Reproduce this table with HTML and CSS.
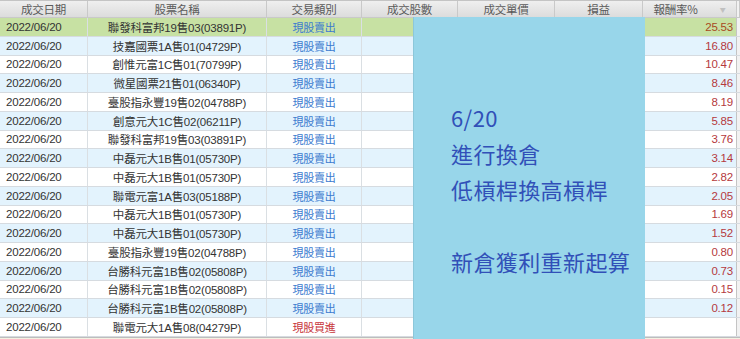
FILE: index.html
```html
<!DOCTYPE html>
<html lang="zh-Hant">
<head>
<meta charset="utf-8">
<title>成交明細</title>
<link rel="stylesheet" href="styles.css">
</head>
<body>
<div class="screen">
  <div class="grid">
    <div class="row head">
      <div class="cell">成交日期</div>
      <div class="cell">股票名稱</div>
      <div class="cell">交易類別</div>
      <div class="cell">成交股數</div>
      <div class="cell">成交單價</div>
      <div class="cell">損益</div>
      <div class="cell">報酬率% <span class="sort">▼</span></div>
      <div class="cell edge"></div>
    </div>
    <div class="row sel"><div class="cell date">2022/06/20</div><div class="cell name">聯發科富邦19售03(03891P)</div><div class="cell type">現股賣出</div><div class="cell"></div><div class="cell"></div><div class="cell"></div><div class="cell pct">25.53</div><div class="cell edge"></div></div>
    <div class="row alt"><div class="cell date">2022/06/20</div><div class="cell name">技嘉國票1A售01(04729P)</div><div class="cell type">現股賣出</div><div class="cell"></div><div class="cell"></div><div class="cell"></div><div class="cell pct">16.80</div><div class="cell edge"></div></div>
    <div class="row"><div class="cell date">2022/06/20</div><div class="cell name">創惟元富1C售01(70799P)</div><div class="cell type">現股賣出</div><div class="cell"></div><div class="cell"></div><div class="cell"></div><div class="cell pct">10.47</div><div class="cell edge"></div></div>
    <div class="row alt"><div class="cell date">2022/06/20</div><div class="cell name">微星國票21售01(06340P)</div><div class="cell type">現股賣出</div><div class="cell"></div><div class="cell"></div><div class="cell"></div><div class="cell pct">8.46</div><div class="cell edge"></div></div>
    <div class="row"><div class="cell date">2022/06/20</div><div class="cell name">臺股指永豐19售02(04788P)</div><div class="cell type">現股賣出</div><div class="cell"></div><div class="cell"></div><div class="cell"></div><div class="cell pct">8.19</div><div class="cell edge"></div></div>
    <div class="row alt"><div class="cell date">2022/06/20</div><div class="cell name">創意元大1C售02(06211P)</div><div class="cell type">現股賣出</div><div class="cell"></div><div class="cell"></div><div class="cell"></div><div class="cell pct">5.85</div><div class="cell edge"></div></div>
    <div class="row"><div class="cell date">2022/06/20</div><div class="cell name">聯發科富邦19售03(03891P)</div><div class="cell type">現股賣出</div><div class="cell"></div><div class="cell"></div><div class="cell"></div><div class="cell pct">3.76</div><div class="cell edge"></div></div>
    <div class="row alt"><div class="cell date">2022/06/20</div><div class="cell name">中磊元大1B售01(05730P)</div><div class="cell type">現股賣出</div><div class="cell"></div><div class="cell"></div><div class="cell"></div><div class="cell pct">3.14</div><div class="cell edge"></div></div>
    <div class="row"><div class="cell date">2022/06/20</div><div class="cell name">中磊元大1B售01(05730P)</div><div class="cell type">現股賣出</div><div class="cell"></div><div class="cell"></div><div class="cell"></div><div class="cell pct">2.82</div><div class="cell edge"></div></div>
    <div class="row alt"><div class="cell date">2022/06/20</div><div class="cell name">聯電元富1A售03(05188P)</div><div class="cell type">現股賣出</div><div class="cell"></div><div class="cell"></div><div class="cell"></div><div class="cell pct">2.05</div><div class="cell edge"></div></div>
    <div class="row"><div class="cell date">2022/06/20</div><div class="cell name">中磊元大1B售01(05730P)</div><div class="cell type">現股賣出</div><div class="cell"></div><div class="cell"></div><div class="cell"></div><div class="cell pct">1.69</div><div class="cell edge"></div></div>
    <div class="row alt"><div class="cell date">2022/06/20</div><div class="cell name">中磊元大1B售01(05730P)</div><div class="cell type">現股賣出</div><div class="cell"></div><div class="cell"></div><div class="cell"></div><div class="cell pct">1.52</div><div class="cell edge"></div></div>
    <div class="row"><div class="cell date">2022/06/20</div><div class="cell name">臺股指永豐19售02(04788P)</div><div class="cell type">現股賣出</div><div class="cell"></div><div class="cell"></div><div class="cell"></div><div class="cell pct">0.80</div><div class="cell edge"></div></div>
    <div class="row alt"><div class="cell date">2022/06/20</div><div class="cell name">台勝科元富1B售02(05808P)</div><div class="cell type">現股賣出</div><div class="cell"></div><div class="cell"></div><div class="cell"></div><div class="cell pct">0.73</div><div class="cell edge"></div></div>
    <div class="row"><div class="cell date">2022/06/20</div><div class="cell name">台勝科元富1B售02(05808P)</div><div class="cell type">現股賣出</div><div class="cell"></div><div class="cell"></div><div class="cell"></div><div class="cell pct">0.15</div><div class="cell edge"></div></div>
    <div class="row alt"><div class="cell date">2022/06/20</div><div class="cell name">台勝科元富1B售02(05808P)</div><div class="cell type">現股賣出</div><div class="cell"></div><div class="cell"></div><div class="cell"></div><div class="cell pct">0.12</div><div class="cell edge"></div></div>
    <div class="row"><div class="cell date">2022/06/20</div><div class="cell name">聯電元大1A售08(04279P)</div><div class="cell type buy">現股買進</div><div class="cell"></div><div class="cell"></div><div class="cell"></div><div class="cell pct"></div><div class="cell edge"></div></div>
    <div class="footer"></div>
  </div>
  <div class="note">
    <p>6/20</p>
    <p>進行換倉</p>
    <p>低槓桿換高槓桿</p>
    <p>&nbsp;</p>
    <p>新倉獲利重新起算</p>
  </div>
</div>
</body>
</html>
```
FILE: styles.css
```css
html, body {
  margin: 0;
  padding: 0;
  background: #ffffff;
}
body {
  font-family: "Liberation Sans", "Noto Sans CJK TC", sans-serif;
  font-size: 11.5px;
  color: #333333;
  width: 740px;
  height: 339px;
  overflow: hidden;
}
.screen {
  position: relative;
  width: 740px;
  height: 339px;
  overflow: hidden;
}
.grid {
  display: flex;
  flex-direction: column;
}
.row {
  display: grid;
  grid-template-columns: 88px 179px 95px 96px 97px 88px 94px 3px;
  height: 18.75px;
  box-sizing: border-box;
  border-bottom: 1px solid #d6dbe0;
  background: #ffffff;
}
.row.alt {
  background: #e3f3fd;
}
.row.sel {
  background: #c7e1a3;
}
.cell {
  display: flex;
  align-items: center;
  justify-content: center;
  border-right: 1px solid #dadfe3;
  white-space: nowrap;
  overflow: hidden;
  letter-spacing: -0.2px;
}
.row.head {
  height: 18px;
  border-top: 1px solid #c4c4c4;
  border-bottom: 1px solid #c9c9c9;
  background: linear-gradient(#efefef, #dcdcdc);
  color: #5a5a5a;
}
.row.head .cell {
  border-right: 1px solid #c9c9c9;
  font-size: 11.5px;
  font-family: "Noto Sans CJK TC", sans-serif;
}
.sort {
  color: #c0c0c0;
  font-size: 6px;
  margin-left: 22px;
}
.cell.date {
  justify-content: flex-start;
  padding-left: 6px;
  color: #333333;
}
.cell.name {
  color: #333333;
}
.cell.type {
  color: #3c7bcf;
  font-size: 11px;
  font-family: "Noto Sans CJK TC", sans-serif;
}
.cell.type.buy {
  color: #c8353a;
}
.cell.pct {
  justify-content: flex-end;
  padding-right: 3px;
  color: #b5393d;
  border-right: 1px solid #c4c4c4;
}
.row.sel .cell.pct {
  color: #a84a22;
}
.cell.edge {
  border-right: none;
  background: #f2f2f2;
}
.footer {
  height: 2px;
  border-top: 1px solid #bdbdbd;
  background: #f4f1e2;
}
.note {
  position: absolute;
  left: 413px;
  top: 17px;
  width: 232px;
  height: 322px;
  box-sizing: border-box;
  padding: 82px 0 0 37px;
  background: #98d6ea;
  border-left: 1px solid #8cc7da;
  color: #3150b8;
  font-family: "Noto Sans CJK TC", sans-serif;
  font-size: 22px;
  font-weight: 400;
  letter-spacing: 0.4px;
}
.note p {
  margin: 0;
  line-height: 36px;
  height: 36px;
}
```
